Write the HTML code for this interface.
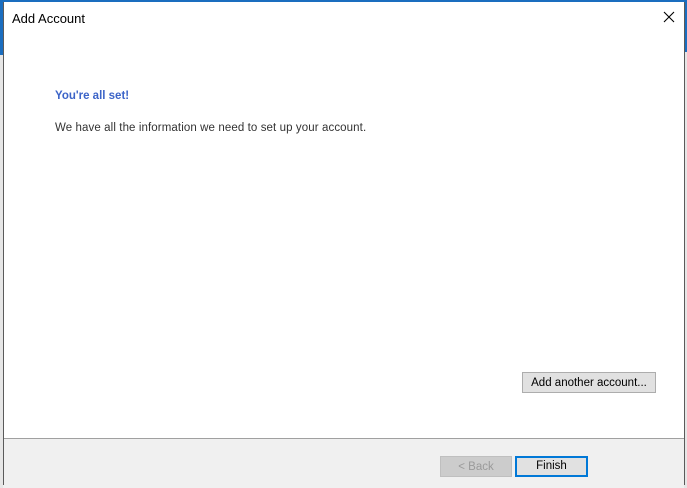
<!DOCTYPE html>
<html><head><style>
body{margin:0;width:687px;height:488px;position:relative;overflow:hidden;background:#f0f0f0;font-family:"Liberation Sans",sans-serif;}
.bgl{position:absolute;left:0;top:0;width:3px;height:488px;background:#e6e6e6;}
.bgl2{position:absolute;left:0;top:0;width:3px;height:55px;background:#1a6dbf;}
.bgr{position:absolute;left:684px;top:0;width:3px;height:488px;background:#e6e6e6;}
.bgr2{position:absolute;left:684px;top:0;width:3px;height:52px;background:#1a6dbf;}
.top{position:absolute;left:0;top:0;width:687px;height:2px;background:#1a6dbf;}
.dlg{position:absolute;left:3px;top:2px;width:680px;height:482px;background:#fff;border:1px solid #5a5a5a;border-top:none;}
.foot{position:absolute;left:0;top:436px;width:680px;height:46px;background:#f0f0f0;border-top:1px solid #a0a0a0;}
.t{position:absolute;font-size:12px;color:#000;}
.btn{position:absolute;height:20px;border:1px solid #adadad;background:#e1e1e1;font-size:11.5px;text-align:center;line-height:20px;box-sizing:border-box;}
</style></head><body>
<div class="bgl"></div><div class="bgl2"></div><div class="bgr"></div><div class="bgr2"></div><div class="top"></div>
<div class="dlg">
<div class="t" style="left:8px;top:9px;font-size:13px;">Add Account</div>
<svg style="position:absolute;left:659px;top:9px" width="12" height="12"><path d="M1 1L11 11M11 1L1 11" stroke="#000" stroke-width="1.1"/></svg>
<div class="t" style="left:51px;top:88px;font-size:11.5px;font-weight:bold;color:#3c64c8;">You're all set!</div>
<div class="t" style="left:51px;top:120px;font-size:11.5px;color:#333;letter-spacing:0.1px;">We have all the information we need to set up your account.</div>
<div class="btn" style="left:518px;top:370px;width:134px;height:21px;">Add another account...</div>
<div class="foot">
<div class="btn" style="left:436px;top:17px;width:72px;height:21px;color:#9a9a9a;border-color:#bfbfbf;background:#cccccc;">&lt; Back</div>
<div class="btn" style="left:511px;top:17px;width:73px;height:21px;border:2px solid #0078d7;line-height:17px;">Finish</div>
</div>
</div>
</body></html>
